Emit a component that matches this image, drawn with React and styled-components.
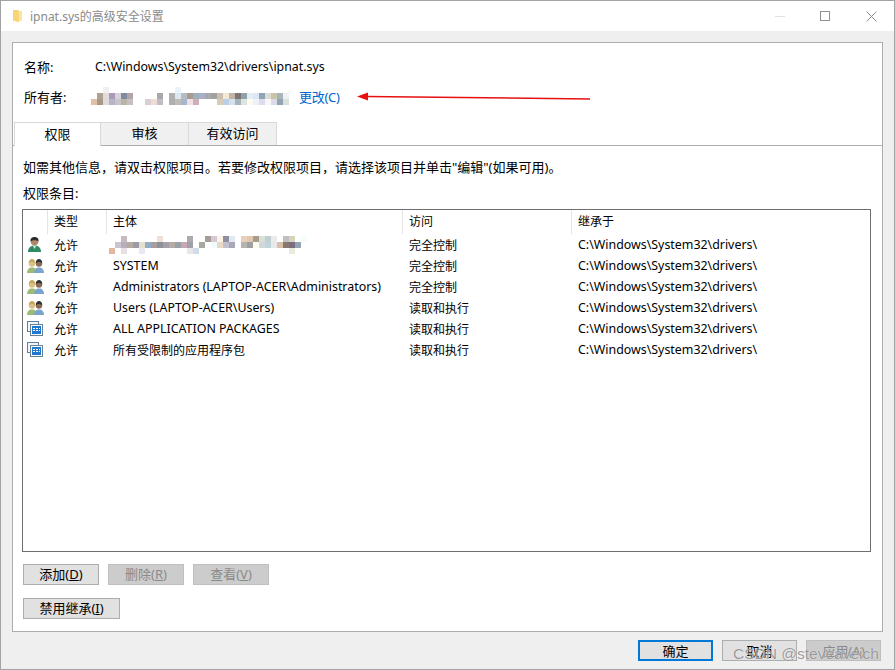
import styled, { createGlobalStyle } from "styled-components";

const GlobalStyle = createGlobalStyle`
  html, body {
    margin: 0;
    padding: 0;
    background: #efefef;
  }
  * {
    box-sizing: border-box;
  }
`;

// blurred names: [row, column, colour], cells are 6px squares
const ownerBlur = [
  [0, 2, "#f0eef2"], [0, 14, "#eaf2fa"],
  ...["#b0a090", "#e0dcdc", "#a89cb8", "#d8d4d8", "#7f8ca0", "#b0a8a8"].map((c, i) => [1, i + 1, c]),
  [1, 11, "#a8a8a8"],
  ...["#b0b0b0", "#dce8f4", "#b8bcc0", "#a89c90", "#9cb0c0", "#a8b0c8", "#a8a8a8", "#a0a0a0", "#c8c0b0", "#f4e8d4", "#c0b4a8", "#807470", "#8fa0b0", "#e4ecf4", "#d8e8f4", "#8fa4b8", "#dcdcd0", "#c8c4a8", "#a8b4b8", "#eef2f4"].map((c, i) => [1, i + 13, c]),
  ...["#e0c0a8", "#a89888", "#e0dcdc", "#b8b4c8", "#c8c4c8", "#b8b4a8", "#c8c0c0"].map((c, i) => [2, i, c]),
  [2, 9, "#d8d0d4"], [2, 10, "#f0dcd4"], [2, 11, "#c0bcc8"],
  ...["#b0b0b0", "#c0bcb8", "#a8b8cc", "#eee0e4", "#d0b0b8"].map((c, i) => [2, i + 13, c]),
  ...["#d8ccb8", "#b8d0e8", "#d8e0ec", "#a8b4bc", "#dce4dc", "#fcfcf0", "#f0f0f8", "#e0dcf0", "#f8f8f8", "#dcdce8", "#90a4b4", "#dce0dc"].map((c, i) => [2, i + 21, c]),
];

const principalBlur = [
  [0, 2, "#c8b8c0"], [0, 8, "#f0e0d8"], [0, 13, "#b0a8b0"], [0, 16, "#a89c98"], [0, 17, "#d8c8d0"], [0, 18, "#fcf4e8"],
  [0, 19, "#8f8fa0"], [0, 20, "#e0e8f4"], [0, 22, "#e8d0b8"], [0, 23, "#e0c8b0"], [0, 24, "#a89c8c"], [0, 25, "#d8e0dc"],
  [0, 26, "#c0d0d0"], [0, 27, "#e8ecec"], [0, 29, "#c0c0c4"], [0, 30, "#d8d4b8"], [0, 32, "#f4fcfc"],
  ...["#c8c4d0", "#b8b0b8", "#b4aca0", "#9c9ca8", "#e4e0cc", "#94acc8", "#a89c9c", "#8f9098", "#a4a0a8", "#b4aca4", "#98a0a8", "#c8a8b0", "#a0a0a8"].map((c, i) => [1, i + 1, c]),
  [1, 15, "#a8a8a0"], [1, 17, "#f0fcfc"], [1, 18, "#e8d8c8"], [1, 19, "#c0c0d0"], [1, 20, "#a8a8b8"],
  ...["#b4b4b0", "#a0a0a0", "#fcfcf0", "#d0d8dc", "#c0d4dc", "#e8e8e8", "#d8c0a8", "#887870", "#7c6c80", "#94a4b4"].map((c, i) => [1, i + 22, c]),
  [2, 0, "#e0b8a0"], [2, 2, "#e8e0e4"], [2, 5, "#e8e8f4"], [2, 13, "#e8e8ec"], [2, 14, "#d0dce8"], [2, 30, "#e8ecdc"],
];

const rows = [
  { icon: "user", name: null, access: "完全控制" },
  { icon: "group", name: "SYSTEM", access: "完全控制", latin: true },
  { icon: "group", name: "Administrators (LAPTOP-ACER\\Administrators)", access: "完全控制", latin: true },
  { icon: "group", name: "Users (LAPTOP-ACER\\Users)", access: "读取和执行", latin: true },
  { icon: "package", name: "ALL APPLICATION PACKAGES", access: "读取和执行", latin: true },
  { icon: "package", name: "所有受限制的应用程序包", access: "读取和执行" },
];

function Mosaic({ cells }) {
  return (
    <MosaicSvg width="198" height="18" viewBox="0 0 198 18" shapeRendering="crispEdges">
      {cells.map(([row, col, color], i) => (
        <rect key={i} x={col * 6} y={row * 6} width="6" height="6" fill={color} />
      ))}
    </MosaicSvg>
  );
}

function FolderIcon() {
  return (
    <svg width="11" height="14" viewBox="0 0 11 14">
      <path d="M1 1h5l1 1v11l-6-1.500z" fill="#f2cf6b" />
      <path d="M6 2h4v10H7z" fill="#fbe59a" />
      <path d="M1 1l6 2v10l-6-1.500z" fill="#f5d67a" />
    </svg>
  );
}

function Person({ x, head, body, hair }) {
  return (
    <g transform={`translate(${x} 0)`}>
      <path d="M0 15c0-3.500 2-5.500 5-5.500s5 2 5 5.500z" fill={body} />
      <circle cx="5" cy="5.500" r="3.200" fill={head} />
      <path d="M1.800 5.500c-.3-3 1.400-4.500 3.200-4.500s3.500 1.500 3.200 4.500C7 3.500 3 3.500 1.800 5.500z" fill={hair} />
    </g>
  );
}

function RowIcon({ type }) {
  if (type === "user") {
    return (
      <svg width="16" height="17" viewBox="0 0 16 17">
        <path d="M1 16c0-4 2.500-6.500 6.500-6.500S14 12 14 16z" fill="#2f8a63" />
        <path d="M6 10l1.500 3L9 10z" fill="#d8efe0" />
        <circle cx="7.500" cy="5.500" r="3.800" fill="#b08868" />
        <path d="M3.600 5.500C3 2 5.500 1 7.500 1s4.500 1 4 4.500C10 3.800 5.500 3.800 3.600 5.500z" fill="#2f2a28" />
      </svg>
    );
  }
  if (type === "group") {
    return (
      <svg width="17" height="16" viewBox="0 0 17 16">
        <Person x={0} head="#dcc088" body="#9dbb72" hair="#c4a860" />
        <Person x={7} head="#8a6a55" body="#7ba4cc" hair="#2e3038" />
      </svg>
    );
  }
  return (
    <svg width="16" height="15" viewBox="0 0 16 15" shapeRendering="crispEdges">
      <rect x="0.500" y="0.500" width="11" height="10" fill="#f2f6fa" stroke="#5f7f9c" />
      <rect x="3.500" y="3.500" width="12" height="11" fill="#f8fbfd" stroke="#6a7f90" />
      <rect x="5" y="5" width="9" height="8" fill="#1f78d0" />
      <rect x="6" y="7" width="2" height="1" fill="#fff" />
      <rect x="9" y="7" width="2" height="1" fill="#fff" />
      <rect x="12" y="7" width="1" height="1" fill="#fff" />
      <rect x="6" y="9" width="2" height="1" fill="#fff" />
      <rect x="9" y="9" width="2" height="1" fill="#fff" />
      <rect x="12" y="9" width="1" height="1" fill="#fff" />
    </svg>
  );
}

export default function App() {
  return (
    <>
      <GlobalStyle />
      <Window>
        <TitleBar>
          <FolderIcon />
          <TitleText>ipnat.sys的高级安全设置</TitleText>
          <WindowControls>
            <MinimizeMark />
            <MaximizeMark />
            <svg width="11" height="11" viewBox="0 0 11 11">
              <path d="M.5.5l10 10M10.500.5l-10 10" stroke="#8f8f8f" fill="none" />
            </svg>
          </WindowControls>
        </TitleBar>
        <Body>
          <Panel>
            <InfoBlock>
              <InfoRow>
                <InfoLabel $width={71}>名称:</InfoLabel>
                <PathText>C:\Windows\System32\drivers\ipnat.sys</PathText>
              </InfoRow>
              <InfoRow>
                <InfoLabel $width={67}>所有者:</InfoLabel>
                <Mosaic cells={ownerBlur} />
                <ChangeLink>更改(C)</ChangeLink>
              </InfoRow>
            </InfoBlock>
            <Tabs>
              <Tab $active>权限</Tab>
              <Tab $width={88}>审核</Tab>
              <Tab $width={88}>有效访问</Tab>
            </Tabs>
            <TabBody>
              <Hint>{"如需其他信息\uFF0C请双击权限项目。若要修改权限项目\uFF0C请选择该项目并单击\"编辑\"(如果可用)。"}</Hint>
              <ListLabel>权限条目:</ListLabel>
              <Table>
                <HeaderRow>
                  <HeaderCell $width={25} />
                  <HeaderCell $width={59}>类型</HeaderCell>
                  <HeaderCell $width={296}>主体</HeaderCell>
                  <HeaderCell $width={169}>访问</HeaderCell>
                  <HeaderCell $width={180} $last>继承于</HeaderCell>
                </HeaderRow>
                <RowList>
                  {rows.map((row, i) => (
                    <Row key={i}>
                      <IconCell><RowIcon type={row.icon} /></IconCell>
                      <Cell $width={59}>允许</Cell>
                      <Cell $width={296} $latin={row.latin}>
                        {row.name ?? <PrincipalBlur><Mosaic cells={principalBlur} /></PrincipalBlur>}
                      </Cell>
                      <Cell $width={169}>{row.access}</Cell>
                      <Cell $width={180} $latin>C:\Windows\System32\drivers\</Cell>
                    </Row>
                  ))}
                </RowList>
              </Table>
              <ActionRow>
                <Button>添加(<u>D</u>)</Button>
                <Button disabled>删除(<u>R</u>)</Button>
                <Button disabled>查看(<u>V</u>)</Button>
              </ActionRow>
              <InheritButton>禁用继承(<u>I</u>)</InheritButton>
            </TabBody>
          </Panel>
          <Footer>
            <FooterButton $primary>确定</FooterButton>
            <FooterButton>取消</FooterButton>
            <FooterButton disabled>应用(A)</FooterButton>
          </Footer>
        </Body>
        <ArrowOverlay width="240" height="12" viewBox="0 0 240 12">
          <path d="M236 8L12 5.500" stroke="#e81010" strokeWidth="1.500" fill="none" />
          <path d="M3 5.500l11-4v8z" fill="#e81010" />
        </ArrowOverlay>
        <Watermark>CSDN @steveaveich</Watermark>
      </Window>
    </>
  );
}

const Window = styled.div`
  position: relative;
  width: 895px;
  height: 670px;
  display: flex;
  flex-direction: column;
  border: 1px solid #a3a3a3;
  background: #efefef;
  overflow: hidden;
  color: #000;
  font-family: "Noto Sans", "Noto Sans CJK SC", sans-serif;
  font-size: 13px;
`;

const TitleBar = styled.div`
  height: 30px;
  flex: none;
  display: flex;
  align-items: center;
  padding-left: 11px;
  background: #fff;
`;

const TitleText = styled.span`
  margin: -1px 0 0 7px;
  font-size: 12px;
  color: #8a8a8a;
`;

const WindowControls = styled.div`
  margin-left: auto;
  display: flex;
  align-items: center;
  gap: 35px;
  padding-right: 17px;
`;

const MinimizeMark = styled.div`
  width: 10px;
  height: 1px;
  background: #e2e2e2;
`;

const MaximizeMark = styled.div`
  width: 10px;
  height: 10px;
  margin-right: 1px;
  border: 1px solid #8f8f8f;
`;

const Body = styled.div`
  flex: 1;
  display: flex;
  flex-direction: column;
  padding: 11px 11px 7px;
`;

const Panel = styled.div`
  height: 590px;
  flex: none;
  display: flex;
  flex-direction: column;
  background: #fff;
  border: 1px solid #acacac;
`;

const InfoBlock = styled.div`
  height: 79px;
  flex: none;
  padding-top: 8px;
  display: flex;
  flex-direction: column;
`;

const InfoRow = styled.div`
  height: 30px;
  display: flex;
  align-items: center;
  padding-left: 11px;
`;

const InfoLabel = styled.span`
  width: ${({ $width }) => $width}px;
  flex: none;
`;

const PathText = styled.span`
  font-size: 12.35px;
`;

const MosaicSvg = styled.svg`
  display: block;
  flex: none;
`;

const ChangeLink = styled.span`
  margin-left: 10px;
  color: #0066cc;
  letter-spacing: -0.3px;
`;

const Tabs = styled.div`
  height: 24px;
  flex: none;
  display: flex;
  padding-left: 1px;
  border-bottom: 1px solid #acacac;
`;

const Tab = styled.div`
  width: ${({ $width }) => ($width ? `${$width}px` : "87px")};
  height: ${({ $active }) => ($active ? "24px" : "23px")};
  padding-bottom: 3px;
  display: flex;
  align-items: center;
  justify-content: center;
  background: ${({ $active }) => ($active ? "#fff" : "#f0f0f0")};
  border: 1px solid #d9d9d9;
  border-bottom: none;
  border-left: ${({ $active }) => ($active ? "1px solid #d9d9d9" : "none")};
`;

const TabBody = styled.div`
  flex: 1;
  display: flex;
  flex-direction: column;
  padding: 7px 11px 0 9px;
`;

const Hint = styled.div`
  height: 26px;
  display: flex;
  align-items: center;
  padding-left: 1px;
  white-space: nowrap;
`;

const ListLabel = styled.div`
  height: 26px;
  display: flex;
  align-items: center;
  padding-left: 1px;
`;

const Table = styled.div`
  height: 343px;
  flex: none;
  margin-top: 4px;
  border: 1px solid #6e6e6e;
  background: #fff;
  font-size: 12px;
`;

const HeaderRow = styled.div`
  height: 24px;
  display: flex;
`;

const HeaderCell = styled.div`
  width: ${({ $width }) => $width}px;
  flex: none;
  display: flex;
  align-items: center;
  padding: 0 0 3px 6px;
  border-right: ${({ $last }) => ($last ? "none" : "1px solid #e5e5e5")};
`;

const RowList = styled.div`
  display: flex;
  flex-direction: column;
`;

const Row = styled.div`
  height: 21px;
  display: flex;
  align-items: center;
`;

const IconCell = styled.div`
  width: 25px;
  flex: none;
  display: flex;
  align-items: center;
  padding-left: 4px;
`;

const Cell = styled.div`
  width: ${({ $width }) => $width}px;
  flex: none;
  padding-left: 6px;
  white-space: nowrap;
  font-size: ${({ $latin }) => ($latin ? "12.4px" : "12px")};
`;

const PrincipalBlur = styled.div`
  height: 18px;
  margin-left: -4px;
`;

const ActionRow = styled.div`
  display: flex;
  gap: 9px;
  margin-top: 12px;
  padding-left: 1px;
`;

const Button = styled.button`
  width: 76px;
  height: 21px;
  padding: 0 0 2px;
  font: inherit;
  color: ${({ disabled }) => (disabled ? "#8a8a8a" : "#000")};
  background: ${({ disabled }) => (disabled ? "#cccccc" : "#e1e1e1")};
  border: 1px solid ${({ disabled }) => (disabled ? "#bfbfbf" : "#adadad")};
  display: flex;
  align-items: center;
  justify-content: center;
`;

const InheritButton = styled(Button)`
  width: 97px;
  margin-top: 13px;
  margin-left: 1px;
`;

const Footer = styled.div`
  display: flex;
  justify-content: flex-end;
  gap: 9px;
  margin-top: 8px;
  padding-right: 2px;
`;

const FooterButton = styled.button`
  width: 75px;
  height: 21px;
  padding: 0 0 1px;
  font: inherit;
  color: ${({ disabled }) => (disabled ? "#8a8a8a" : "#000")};
  background: ${({ disabled }) => (disabled ? "#cccccc" : "#e1e1e1")};
  border: ${({ $primary, disabled }) =>
    $primary ? "2px solid #0078d7" : `1px solid ${disabled ? "#bfbfbf" : "#adadad"}`};
  display: flex;
  align-items: center;
  justify-content: center;
`;

const ArrowOverlay = styled.svg`
  position: absolute;
  left: 353px;
  top: 90px;
`;

const Watermark = styled.div`
  position: absolute;
  left: 732px;
  top: 644px;
  font-family: "Liberation Sans", sans-serif;
  font-size: 15.500px;
  color: rgba(120, 120, 120, 0.75);
  text-shadow: 0 0 1px #fff;
  white-space: nowrap;
`;
